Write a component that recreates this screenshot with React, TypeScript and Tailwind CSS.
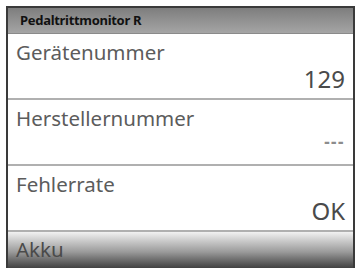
import React from "react";

type Row = {
  label: string;
  value: string;
  valueClass: string;
};

const rows: Row[] = [
  { label: "Gerätenummer", value: "129", valueClass: "text-[24px] text-[#4a4a4a] mb-[7px]" },
  { label: "Herstellernummer", value: "---", valueClass: "text-[17px] font-bold text-[#8c8c8c] tracking-[1.5px] mb-[14px]" },
  { label: "Fehlerrate", value: "OK", valueClass: "text-[24px] text-[#4a4a4a] mb-[7px]" },
];

export default function App() {
  return (
    <div className="w-[356px] h-[268px] bg-white overflow-hidden font-['Noto_Sans',sans-serif]">
      <div className="ml-[6px] mt-[6px] w-[349px] border-t-2 border-x-2 border-[#3a3a3a] bg-white">
        {/* title bar */}
        <div className="h-[26px] flex items-center pl-[12px] bg-gradient-to-b from-[#7e7e7e] to-[#a5a5a5] border-b border-[#8a8a8a]">
          <span className="text-[13px] font-bold text-[#111] tracking-[-0.3px]">Pedaltrittmonitor R</span>
        </div>

        {rows.map((row) => (
          <div key={row.label} className="h-[66px] flex flex-col border-b-2 border-[#b0b0b0] px-[8px]">
            <div className="text-[20.5px] leading-none text-[#5c5c5c] pt-[8px]">{row.label}</div>
            <div className={`mt-auto self-end leading-none ${row.valueClass}`}>{row.value}</div>
          </div>
        ))}

        {/* next item, cut off */}
        <div className="h-[40px] pl-[8px] pt-[7px] bg-gradient-to-b from-[#f2f2f2] via-[#9a9a9a] to-[#2e2e2e]">
          <span className="text-[20.5px] leading-none text-[#4a4a4a]">Akku</span>
        </div>
      </div>
    </div>
  );
}
